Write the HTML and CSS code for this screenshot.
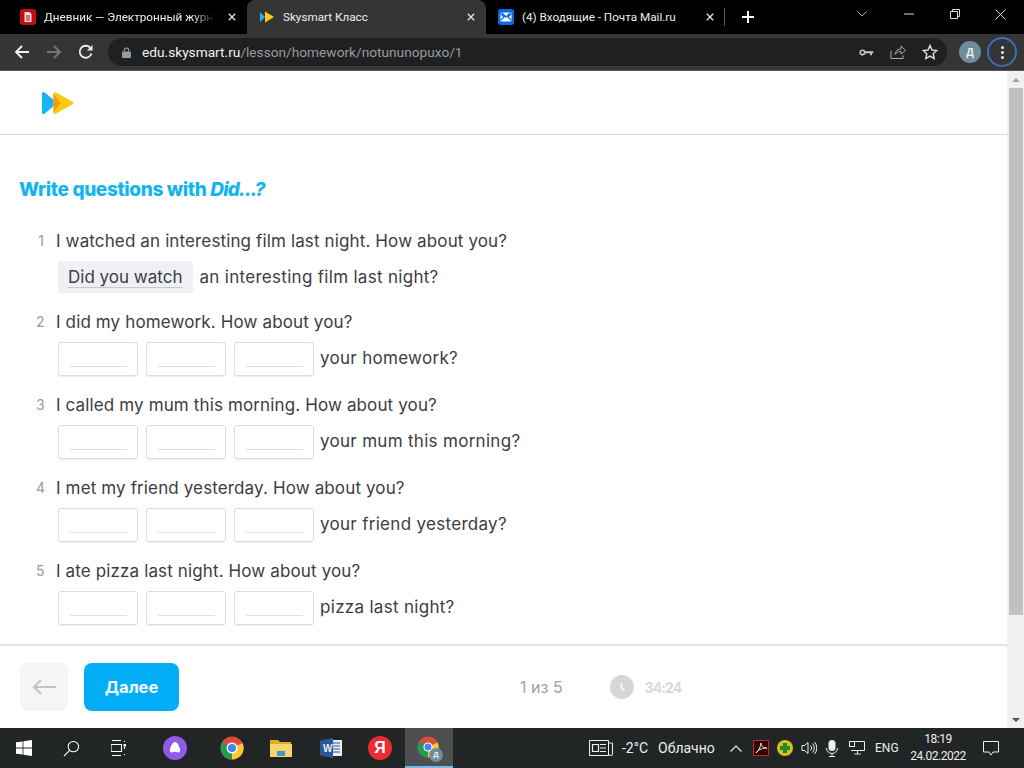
FILE: index.html
```html
<!DOCTYPE html>
<html lang="ru">
<head>
<meta charset="utf-8">
<title>Skysmart Класс</title>
<link rel="stylesheet" href="styles.css">
</head>
<body>
<div class="tabstrip">
  <div class="tab">
    <svg class="fav" viewBox="0 0 16 16"><rect width="16" height="16" rx="3" fill="#c00d12"/><path d="M4.500 3h5l2 2v8h-7z" fill="#f3dcdc"/><path d="M6 7h4M6 9h4M6 11h4" stroke="#c00d12"/></svg>
    <span class="tab-title fade">Дневник — Электронный журнал</span>
    <svg class="x" viewBox="0 0 10 10"><path d="M1 1l8 8M9 1l-8 8"/></svg>
  </div>
  <div class="tab active">
    <svg class="fav" viewBox="0 0 16 16"><path d="M1 3l5 5-5 5z" fill="#18b4f4"/><path d="M6 2.500l9 5.500-9 5.500z" fill="#fecb0f"/></svg>
    <span class="tab-title">Skysmart Класс</span>
    <svg class="x" viewBox="0 0 10 10"><path d="M1 1l8 8M9 1l-8 8"/></svg>
  </div>
  <div class="tab">
    <svg class="fav" viewBox="0 0 16 16"><rect width="16" height="16" rx="3" fill="#0b6ae0"/><rect x="2.500" y="3.500" width="11" height="9" rx="1.500" fill="#fff"/><path d="M3 5l3 3-3 3M13 5l-3 3 3 3M4 4l4 4 4-4" fill="none" stroke="#0b6ae0" stroke-width="1.300"/></svg>
    <span class="tab-title">(4) Входящие - Почта Mail.ru</span>
    <svg class="x" viewBox="0 0 10 10"><path d="M1 1l8 8M9 1l-8 8"/></svg>
  </div>
  <span class="tab-sep"></span>
  <svg class="newtab" viewBox="0 0 12 12"><path d="M6 0v12M0 6h12"/></svg>
  <div class="win">
    <svg class="w-chev" viewBox="0 0 10 6"><path d="M.5.500L5 5 9.500.500"/></svg>
    <svg class="w-min" viewBox="0 0 10 2"><path d="M0 1h10"/></svg>
    <svg class="w-max" viewBox="0 0 10 10"><path d="M.5 2.500h7v7h-7zM2.500 2.500v-2h7v7h-2"/></svg>
    <svg class="w-close" viewBox="0 0 11 11"><path d="M.5.500l10 10M10.500.500l-10 10"/></svg>
  </div>
</div>
<div class="toolbar">
  <svg class="nav" viewBox="0 0 16 16"><path d="M15 8H2M8 2L2 8l6 6" stroke="#f1f1f1"/></svg>
  <svg class="nav" viewBox="0 0 16 16"><path d="M1 8h13M8 2l6 6-6 6" stroke="#777"/></svg>
  <svg class="nav last" viewBox="0 0 16 16"><path d="M13.500 9.500A6 6 0 1 1 12 3.500" stroke="#f1f1f1"/><path d="M14.500 1v5.500H9z" fill="#f1f1f1"/></svg>
  <div class="omnibox">
    <svg class="lock" viewBox="0 0 10 12"><path d="M2.500 5V3.500a2.500 2.500 0 0 1 5 0V5" fill="none" stroke="#9a9b9d" stroke-width="1.300"/><rect y="5" width="10" height="7" rx="1" fill="#9a9b9d"/></svg>
    <span class="url"><b>edu.skysmart.ru</b>/lesson/homework/notununopuxo/1</span>
    <svg class="om-ic key" viewBox="0 0 16 10"><circle cx="3.500" cy="5" r="2.500" fill="none" stroke="#c5c6c8" stroke-width="1.800"/><path d="M6 3.500h9.500v2.200H14V8h-2V5.700H6z" fill="#c5c6c8"/></svg>
    <svg class="om-ic share" viewBox="0 0 16 16"><path d="M1 6.500V14.500h12v-3M5 10.500C5.500 7 8 5 11 5V2l4.500 4.500L11 10V7.500c-2.500 0-4.500 1-6 3z" fill="none" stroke="#a9aaac"/></svg>
    <svg class="om-ic star" viewBox="0 0 16 16"><path d="M8 1.500l2 4.500 4.800.500-3.600 3.200 1 4.800L8 12.100l-4.200 2.400 1-4.800L1.200 6.500 6 6z" fill="none" stroke="#dcdcdd" stroke-width="1.400"/></svg>
  </div>
  <span class="avatar">Д</span>
  <span class="menu"><i></i><i></i><i></i></span>
</div>
<div class="viewport">
  <div class="page">
    <header class="site-head">
      <svg class="logo" viewBox="0 0 32 22"><path d="M1.500 1.500L13 11 1.500 20.500z" fill="#18b4f4" stroke="#18b4f4" stroke-width="3" stroke-linejoin="round"/><path d="M13 1.500L30 11 13 20.500z" fill="#fecb0f" stroke="#fecb0f" stroke-width="3" stroke-linejoin="round"/><path d="M11.500 1.500L18.500 11 11.500 20.500z" fill="#fb9a0e"/></svg>
    </header>
    <main class="lesson">
      <h1>Write questions with <em>Did...?</em></h1>
      <ol class="tasks">
        <li class="task">
          <p><span class="num">1</span>I watched an interesting film last night. How about you?</p>
          <div class="answer"><span class="filled"><u>Did you watch</u></span><span class="tail">an interesting film last night?</span></div>
        </li>
        <li class="task">
          <p><span class="num">2</span>I did my homework. How about you?</p>
          <div class="answer"><span class="blank"></span><span class="blank"></span><span class="blank"></span><span class="tail">your homework?</span></div>
        </li>
        <li class="task">
          <p><span class="num">3</span>I called my mum this morning. How about you?</p>
          <div class="answer"><span class="blank"></span><span class="blank"></span><span class="blank"></span><span class="tail">your mum this morning?</span></div>
        </li>
        <li class="task">
          <p><span class="num">4</span>I met my friend yesterday. How about you?</p>
          <div class="answer"><span class="blank"></span><span class="blank"></span><span class="blank"></span><span class="tail">your friend yesterday?</span></div>
        </li>
        <li class="task">
          <p><span class="num">5</span>I ate pizza last night. How about you?</p>
          <div class="answer"><span class="blank"></span><span class="blank"></span><span class="blank"></span><span class="tail">pizza last night?</span></div>
        </li>
      </ol>
    </main>
    <footer class="pager">
      <button class="back"><svg viewBox="0 0 24 16"><path d="M24 8H2M9 1L2 8l7 7"/></svg></button>
      <button class="next">Далее</button>
      <span class="count">1 из 5</span>
      <svg class="clock" viewBox="0 0 24 24"><circle cx="12" cy="12" r="12" fill="#d6d6d6"/><path d="M11.500 8v5l3 2.500" fill="none" stroke="#fff" stroke-width="1.600"/></svg>
      <span class="time">34:24</span>
    </footer>
  </div>
  <div class="scrollbar">
    <span class="arrow up"></span>
    <span class="thumb"></span>
    <span class="arrow down"></span>
  </div>
</div>
<div class="taskbar">
  <svg class="start" viewBox="0 0 16 16"><path d="M0 2.300L6.600 1.400V7.600H0zM7.400 1.300L16 0V7.600H7.400zM0 8.400H6.600V14.600L0 13.700zM7.400 8.400H16V16L7.400 14.700z" fill="#fff"/></svg>
  <svg class="tb search" viewBox="0 0 18 18"><circle cx="11" cy="7" r="5.500" fill="none" stroke="#fff" stroke-width="1.100"/><path d="M7 11l-6 6" stroke="#fff" stroke-width="1.200"/></svg>
  <svg class="tb tasks-ic" viewBox="0 0 16 16"><path d="M0 4.500h10.500v7H0zM1 .500h9M1 15.500h9M13.500 1v1M13.500 7v2M13.500 14v1" fill="none" stroke="#fff" stroke-width="1.100"/><rect x="12.500" y="4" width="2.500" height="2.500" fill="#fff"/></svg>
  <svg class="tb alice" viewBox="0 0 24 24"><circle cx="12" cy="12" r="12" fill="#8e5ce6"/><path d="M12 6c2.500 0 4 4 5 7 .7 2.500-1 4-2.500 3.300-1.700-.7-3.300-.7-5 0C8 17 6.300 15.500 7 13c1-3 2.500-7 5-7z" fill="#fff"/></svg>
  <svg class="tb chrome" viewBox="0 0 24 24"><circle cx="12" cy="12" r="11.500" fill="#dd4b3e"/><path d="M12 12L22.500 7A11.500 11.500 0 0 1 12 23.500z" fill="#fcc934"/><path d="M12 12L12 23.500A11.500 11.500 0 0 1 2 6.500z" fill="#1e9e52"/><circle cx="12" cy="12" r="5.500" fill="#fff"/><circle cx="12" cy="12" r="4" fill="#4285f4"/></svg>
  <svg class="tb folder" viewBox="0 0 22 18"><path d="M0 1h8l2 2h11v3H0z" fill="#e8a91e"/><rect y="5" width="22" height="13" fill="#f5d56e"/><rect x="7" y="12" width="8" height="5" fill="#4d95c3"/></svg>
  <svg class="tb word" viewBox="0 0 22 20"><rect x="7" y="2" width="15" height="16" fill="#e9edf5"/><path d="M10 5h10M10 8h10M10 11h10M10 14h10" stroke="#2b579a"/><path d="M0 2.500L13 0v20L0 17.500z" fill="#2b579a"/></svg>
  <span class="word-w">W</span>
  <span class="yandex">Я</span>
  <span class="running">
    <svg class="chrome-run" viewBox="0 0 24 24"><circle cx="12" cy="12" r="11.500" fill="#dd4b3e"/><path d="M12 12L22.500 7A11.500 11.500 0 0 1 12 23.500z" fill="#fcc934"/><path d="M12 12L12 23.500A11.500 11.500 0 0 1 2 6.500z" fill="#1e9e52"/><circle cx="12" cy="12" r="5" fill="#fff"/><circle cx="12" cy="12" r="3.800" fill="#4285f4"/></svg>
    <span class="run-badge">Д</span>
  </span>
  <div class="tray">
    <svg class="news" viewBox="0 0 24 16"><path d="M.5.500h19v15H.5zM20 3h3.500v11a1.500 1.500 0 0 1-3.500 0" fill="none" stroke="#eee"/><path d="M3.500 4.500h6v7h-6zM11 4.500h6M11 8h6M11 11.500h6" fill="none" stroke="#eee" stroke-width="1.200"/></svg>
    <span class="temp">-2°C</span>
    <span class="cond">Облачно</span>
    <svg class="chev" viewBox="0 0 12 7"><path d="M.5 6.500L6 1l5.500 5.500" fill="none" stroke="#eee" stroke-width="1.100"/></svg>
    <svg class="pdf" viewBox="0 0 16 16"><rect x=".5" y=".5" width="15" height="15" fill="#300" stroke="#c8232a"/><path d="M3 13C6 10 8 6 8 3c0 3 2 5 6 5-4 0-8 1-11 5z" fill="none" stroke="#eee"/></svg>
    <svg class="green" viewBox="0 0 16 16"><circle cx="8" cy="8" r="8" fill="#d3c21d"/><path d="M6 3h4v3h3v4h-3v3H6v-3H3V6h3z" fill="#1d8a2f"/></svg>
    <svg class="sound" viewBox="0 0 16 14"><path d="M1 4.500h2.500L7 1.500v11L3.500 9.500H1zM9.500 4.500a3.500 3.500 0 0 1 0 5M11.500 2.500a6.500 6.500 0 0 1 0 9M13.500 1a9 9 0 0 1 0 12" fill="none" stroke="#eee"/></svg>
    <svg class="mic" viewBox="0 0 12 17"><rect x="2.500" y="0" width="7" height="11" rx="3.500" fill="#eee"/><path d="M.5 8a5.500 5.500 0 0 0 11 0M6 13.500V16M3 16.500h6" fill="none" stroke="#eee"/></svg>
    <svg class="net" viewBox="0 0 16 14"><path d="M3 .5H15.500v9H2M8.500 9.500v3M5.500 13h6" fill="none" stroke="#eee"/><rect x=".5" y=".5" width="5" height="5" fill="#222526" stroke="#eee"/></svg>
    <span class="lang">ENG</span>
    <span class="clock-t"><span>18:19</span><span>24.02.2022</span></span>
    <svg class="notif" viewBox="0 0 16 15"><path d="M.5.500h15v10.500H10L8 14l-2-3H.5z" fill="none" stroke="#eee"/></svg>
  </div>
</div>
</body>
</html>
```
FILE: styles.css
```css
* { box-sizing: border-box; }
html, body { margin: 0; height: 100%; overflow: hidden; }
body { display: flex; flex-direction: column; width: 1024px; height: 768px; font-family: "Liberation Sans", Arial, sans-serif; background: #fff; }
svg { display: block; flex: none; }

.tabstrip { height: 34px; background: #000; display: flex; align-items: center; padding-left: 8px; color: #eee; font: 11.700px Roboto, sans-serif; }
.tab { width: 239px; height: 34px; display: flex; align-items: center; padding: 0 11px 0 12px; border-radius: 8px 8px 0 0; }
.tab.active { background: #353536; }
.fav { width: 16px; height: 16px; margin-right: 8px; }
.tab-title { flex: 1; white-space: nowrap; overflow: hidden; }
.fade { -webkit-mask-image: linear-gradient(90deg, #000 88%, transparent); mask-image: linear-gradient(90deg, #000 88%, transparent); margin-right: 8px; }
.x { width: 8px; height: 8px; margin-left: 6px; stroke: #e8e8e8; stroke-width: 1.600; fill: none; }
.tab-sep { width: 1px; height: 18px; background: #555; margin-left: -1px; }
.newtab { width: 12px; height: 12px; margin-left: 17px; stroke: #fff; stroke-width: 2; fill: none; }
.win { margin-left: auto; display: flex; align-items: center; height: 100%; stroke: #ddd; fill: none; margin-top: -6px; }
.w-chev { width: 10px; height: 6px; margin-right: 37px; stroke: #aaa; }
.w-min { width: 10px; height: 2px; margin-right: 36px; }
.w-max { width: 10px; height: 10px; margin-right: 35px; }
.w-close { width: 11px; height: 11px; margin-right: 18px; }

.toolbar { height: 37px; background: #353536; display: flex; align-items: center; padding-left: 14px; border-bottom: 1px solid #555; }
.nav { width: 16px; height: 16px; margin-right: 16px; fill: none; stroke-width: 1.800; }
.nav.last { margin-right: 14px; }
.omnibox { width: 839px; height: 28px; background: #1f2022; border-radius: 14px; display: flex; align-items: center; padding-left: 14px; margin-right: 12px; }
.lock { width: 9px; height: 11px; margin-right: 11px; }
.url { font: 13.700px Roboto, sans-serif; color: #9a9b9d; flex: 1; white-space: nowrap; }
.url b { font-weight: 400; color: #f1f1f1; }
.om-ic { margin-right: 16px; }
.key { width: 15px; height: 9px; }
.share { width: 16px; height: 16px; }
.star { width: 16px; height: 16px; margin-right: 9px; }
.avatar { width: 22px; height: 22px; border-radius: 50%; background: #6f8d9b; color: #eee; font: bold 10px/22px "Open Sans", sans-serif; text-align: center; }
.menu { width: 30px; height: 30px; margin-left: 6px; border: 2px solid #3b6fb8; border-radius: 50%; display: flex; flex-direction: column; align-items: center; justify-content: center; gap: 2px; }
.menu i { width: 3px; height: 3px; background: #eee; border-radius: 50%; }

.viewport { height: 657px; display: flex; }
.page { width: 1007px; display: flex; flex-direction: column; }
.site-head { height: 64px; border-bottom: 1px solid #d8d8d8; padding: 21px 0 0 42px; flex: none; }
.logo { width: 32px; height: 22px; }
.lesson { flex: 1; padding: 0 0 0 20px; font: 17px "Inter", sans-serif; color: #3c3c44; }
h1 { margin: 43px 0 0 -1px; font: 800 19px/24px "Inter", sans-serif; color: #12b5ee; letter-spacing: -.36px; }
h1 em { font-style: italic; letter-spacing: -.9px; }
.tasks { list-style: none; margin: 27px 0 0; padding: 0; }
.task { margin-bottom: 17px; }
.task p { margin: 0; height: 24px; line-height: 24px; position: relative; padding-left: 36px; letter-spacing: .13px; }
.num { position: absolute; left: 16px; width: 8px; text-align: right; color: #9a9a9a; font-size: 14px; letter-spacing: 0; }
.answer { display: flex; align-items: center; gap: 8px; margin: 8px 0 0 38px; letter-spacing: .3px; }
.tail { margin: -2px 0 0 -2px; }
.blank { width: 80px; height: 34px; border: 1px solid #dedcd8; border-radius: 3px; position: relative; box-shadow: 0 1px 1px #eee; }
.blank::after { content: ""; position: absolute; left: 11px; right: 10px; bottom: 8px; border-bottom: 1px solid #e0e0e0; }
.filled { height: 32px; background: #eef0f3; border-radius: 3px; padding: 0 11px 0 10px; line-height: 32px; letter-spacing: 0; }
.filled + .tail { margin-top: 0; }
.filled u { text-decoration-color: #c9c9c9; text-underline-offset: 4px; text-decoration-thickness: 1px; }

.pager { height: 84px; flex: none; border-top: 2px solid #e3e3e3; display: flex; align-items: center; padding: 0 0 0 20px; font: 16px "Inter", sans-serif; }
.pager button { border: 0; height: 48px; border-radius: 8px; padding: 0; }
.back { width: 48px; background: #f5f5f5; display: flex; align-items: center; justify-content: center; }
.back svg { width: 24px; height: 16px; fill: none; stroke: #c2c2c2; stroke-width: 2; }
.next { width: 95px; margin-left: 16px; background: #04aef7; color: #f4fcff; font: 700 16.500px "Inter", sans-serif; }
.count { margin-left: 341px; color: #a0a0a0; }
.clock { width: 24px; height: 24px; margin-left: 47px; }
.time { margin-left: 11px; color: #d9d9d9; font-weight: 700; font-size: 14px; letter-spacing: -.9px; }

.scrollbar { width: 17px; background: #f1f1f1; display: flex; flex-direction: column; align-items: center; }
.thumb { width: 14px; height: 527px; background: #c1c1c1; }
.arrow { width: 0; height: 0; border: 4px solid transparent; }
.up { border-bottom: 4px solid #a3a3a3; margin: 3px 0 6px; }
.down { border-top: 4px solid #505050; margin-top: auto; margin-bottom: 2px; }

.taskbar { height: 40px; background: #222526; display: flex; align-items: center; padding-left: 16px; color: #eee; font: 14px Roboto, sans-serif; }
.start { width: 16px; height: 16px; }
.tb { flex: none; }
.search { width: 17px; height: 17px; margin-left: 31px; }
.tasks-ic { width: 16px; height: 16px; margin-left: 31px; }
.alice { width: 24px; height: 24px; margin-left: 36px; }
.chrome { width: 24px; height: 24px; margin-left: 33px; }
.folder { width: 22px; height: 18px; margin-left: 26px; }
.word { width: 22px; height: 20px; margin-left: 28px; }
.word-w { font: bold 10px "Liberation Sans", sans-serif; margin-left: -19px; width: 10px; margin-right: 9px; position: relative; }
.yandex { width: 24px; height: 24px; border-radius: 50%; background: #ea2c33; color: #fff; font: bold 16px/24px "Liberation Sans", sans-serif; text-align: center; margin-left: 26px; }
.running { width: 48px; height: 40px; margin-left: 13px; background: #4d4f50; border-bottom: 2px solid #76b9ed; display: flex; align-items: center; justify-content: center; position: relative; }
.chrome-run { width: 22px; height: 22px; margin-left: -2px; }
.run-badge { position: absolute; left: 24px; top: 20px; width: 14px; height: 14px; border-radius: 50%; background: #6f8d9b; font: bold 7px/14px "Open Sans", sans-serif; text-align: center; }
.tray { margin-left: 136px; display: flex; align-items: center; height: 100%; }
.news { width: 24px; height: 16px; margin-right: 9px; }
.temp { width: 36px; }
.cond { width: 72px; }
.chev { width: 12px; height: 7px; margin-right: 11px; }
.pdf { width: 16px; height: 16px; margin-right: 8px; }
.green { width: 16px; height: 16px; margin-right: 8px; }
.sound { width: 16px; height: 14px; margin-right: 9px; }
.mic { width: 12px; height: 17px; margin-right: 11px; }
.net { width: 16px; height: 14px; margin-right: 10px; }
.lang { width: 36px; font-size: 12px; }
.clock-t { width: 54px; display: flex; flex-direction: column; align-items: center; font-size: 12px; line-height: 17px; letter-spacing: -.5px; margin-right: 18px; white-space: nowrap; }
.notif { width: 16px; height: 15px; }
```
